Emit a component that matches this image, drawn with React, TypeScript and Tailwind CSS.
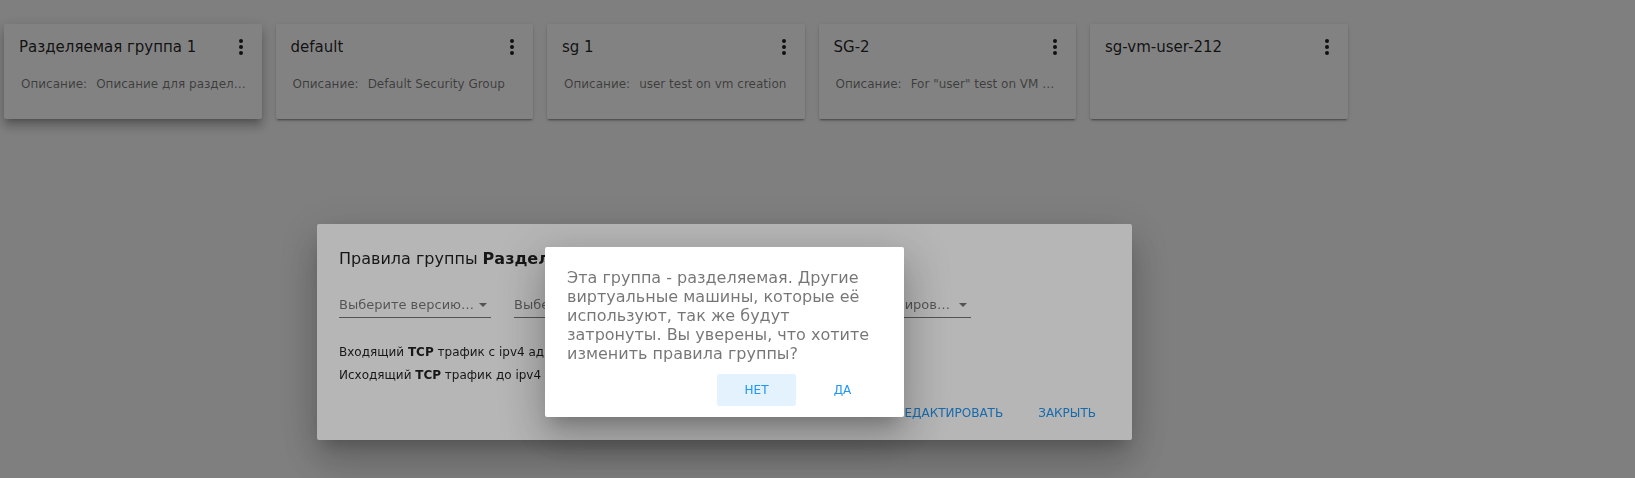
import { useId, type ReactNode } from 'react';

type Group = { name: string; description?: string; raised?: boolean };

const groups: Group[] = [
  { name: 'Разделяемая группа 1', description: 'Описание для разделяемой группы', raised: true },
  { name: 'default', description: 'Default Security Group' },
  { name: 'sg 1', description: 'user test on vm creation' },
  { name: 'SG-2', description: 'For "user" test on VM windows' },
  { name: 'sg-vm-user-212' },
];

function GroupCard({ name, description, raised }: Group) {
  const shadow = raised
    ? 'shadow-[0_5px_5px_-3px_rgba(0,0,0,0.2),0_8px_10px_1px_rgba(0,0,0,0.14),0_3px_14px_2px_rgba(0,0,0,0.12)]'
    : 'shadow-[0_3px_1px_-2px_rgba(0,0,0,0.2),0_2px_2px_0_rgba(0,0,0,0.14),0_1px_5px_0_rgba(0,0,0,0.12)]';
  return (
    <article className={`h-[95px] min-w-0 rounded-[2px] bg-white px-[15px] pt-[12px] ${shadow}`}>
      <div className="flex items-center justify-between">
        <h2 className="truncate text-[15px] leading-[22px] text-black/87">{name}</h2>
        <button type="button" aria-label={`Меню: ${name}`} className="flex w-[12px] justify-center text-black/87">
          <svg viewBox="0 0 4 16" className="h-[16px] w-[4px] fill-current" aria-hidden="true">
            <circle cx="2" cy="2" r="2" />
            <circle cx="2" cy="8" r="2" />
            <circle cx="2" cy="14" r="2" />
          </svg>
        </button>
      </div>
      {description && (
        <p className="mt-[18px] flex gap-[9px] pl-[2px] text-[12px] leading-[16px] text-black/54">
          <span>Описание:</span>
          <span className="truncate">{description}</span>
        </p>
      )}
    </article>
  );
}

function Overlay({ children }: { children: ReactNode }) {
  return (
    <div className="fixed inset-0 flex items-center justify-center bg-black/[0.285] pt-[186px] pr-[186px]">
      {children}
    </div>
  );
}

const dialogShadow =
  'shadow-[0_11px_15px_-7px_rgba(0,0,0,0.2),0_24px_38px_3px_rgba(0,0,0,0.14),0_9px_46px_8px_rgba(0,0,0,0.12)]';

type FilterProps = { label: string; text: string; className: string; alignEnd?: boolean };

function Filter({ label, text, className, alignEnd }: FilterProps) {
  const id = useId();
  return (
    <div className={`relative border-b border-black/54 ${className}`}>
      <label htmlFor={id} className="sr-only">{label}</label>
      <select
        id={id}
        className={`block h-[24px] w-full appearance-none bg-transparent text-[13px] text-black/54 outline-none ${
          alignEnd ? 'pr-[21px] [text-align-last:right]' : ''
        }`}
      >
        <option>{text}</option>
      </select>
      <svg viewBox="0 0 8 4" className="pointer-events-none absolute top-[10px] right-[4px] h-[4px] w-[8px] fill-black/54" aria-hidden="true">
        <path d="M0 0h8L4 4z" />
      </svg>
    </div>
  );
}

export default function App() {
  return (
    <div className="min-h-screen bg-[#fafafa] font-['DejaVu_Sans',sans-serif]">
      <main className="grid grid-cols-6 gap-x-[14px] pt-[24px] pr-[16px] pl-[4px]">
        {groups.map((group) => (
          <GroupCard key={group.name} {...group} />
        ))}
      </main>

      <Overlay>
        <section role="dialog" aria-label="Правила группы" className={`w-[815px] rounded-[2px] bg-white px-[22px] pt-[23px] pb-[11px] ${dialogShadow}`}>
          <h2 className="text-[16px] leading-[24px] text-black/87">
            Правила группы <b>Разделяемая группа 1</b>
          </h2>
          <div className="mt-[22px] flex gap-[23px]">
            <Filter label="Версия" text="Выберите версию…" className="w-[152px]" />
            <Filter label="Протокол" text="Выберите протокол…" className="w-[152px]" />
            <Filter label="Действие" text="Выберите вид планиров…" className="w-[282px]" alignEnd />
          </div>
          <ul className="mt-[23px] text-[12px] leading-[23px] text-black/87">
            <li>Входящий <b>TCP</b> трафик с ipv4 адреса</li>
            <li>Исходящий <b>TCP</b> трафик до ipv4 адреса</li>
          </ul>
          <div className="mt-[10px] flex justify-end gap-[7px] text-[12px] text-[#2196f3]">
            <button type="button" className="h-[32px] px-[14px]">РЕДАКТИРОВАТЬ</button>
            <button type="button" className="h-[32px] px-[14px]">ЗАКРЫТЬ</button>
          </div>
        </section>
      </Overlay>

      <Overlay>
        <section role="alertdialog" aria-label="Подтверждение" className={`w-[359px] rounded-[2px] bg-white px-[22px] pt-[21px] pb-[11px] ${dialogShadow}`}>
          <p className="text-[16px] leading-[19px] text-black/54">
            Эта группа - разделяемая. Другие виртуальные машины, которые её используют, так же будут затронуты. Вы уверены, что хотите изменить правила группы?
          </p>
          <div className="mt-[11px] flex justify-end gap-[7px] text-[12px] text-[#2196f3]">
            <button type="button" className="h-[32px] w-[79px] rounded-[2px] bg-[#2196f3]/12">НЕТ</button>
            <button type="button" className="h-[32px] w-[79px] rounded-[2px]">ДА</button>
          </div>
        </section>
      </Overlay>
    </div>
  );
}
